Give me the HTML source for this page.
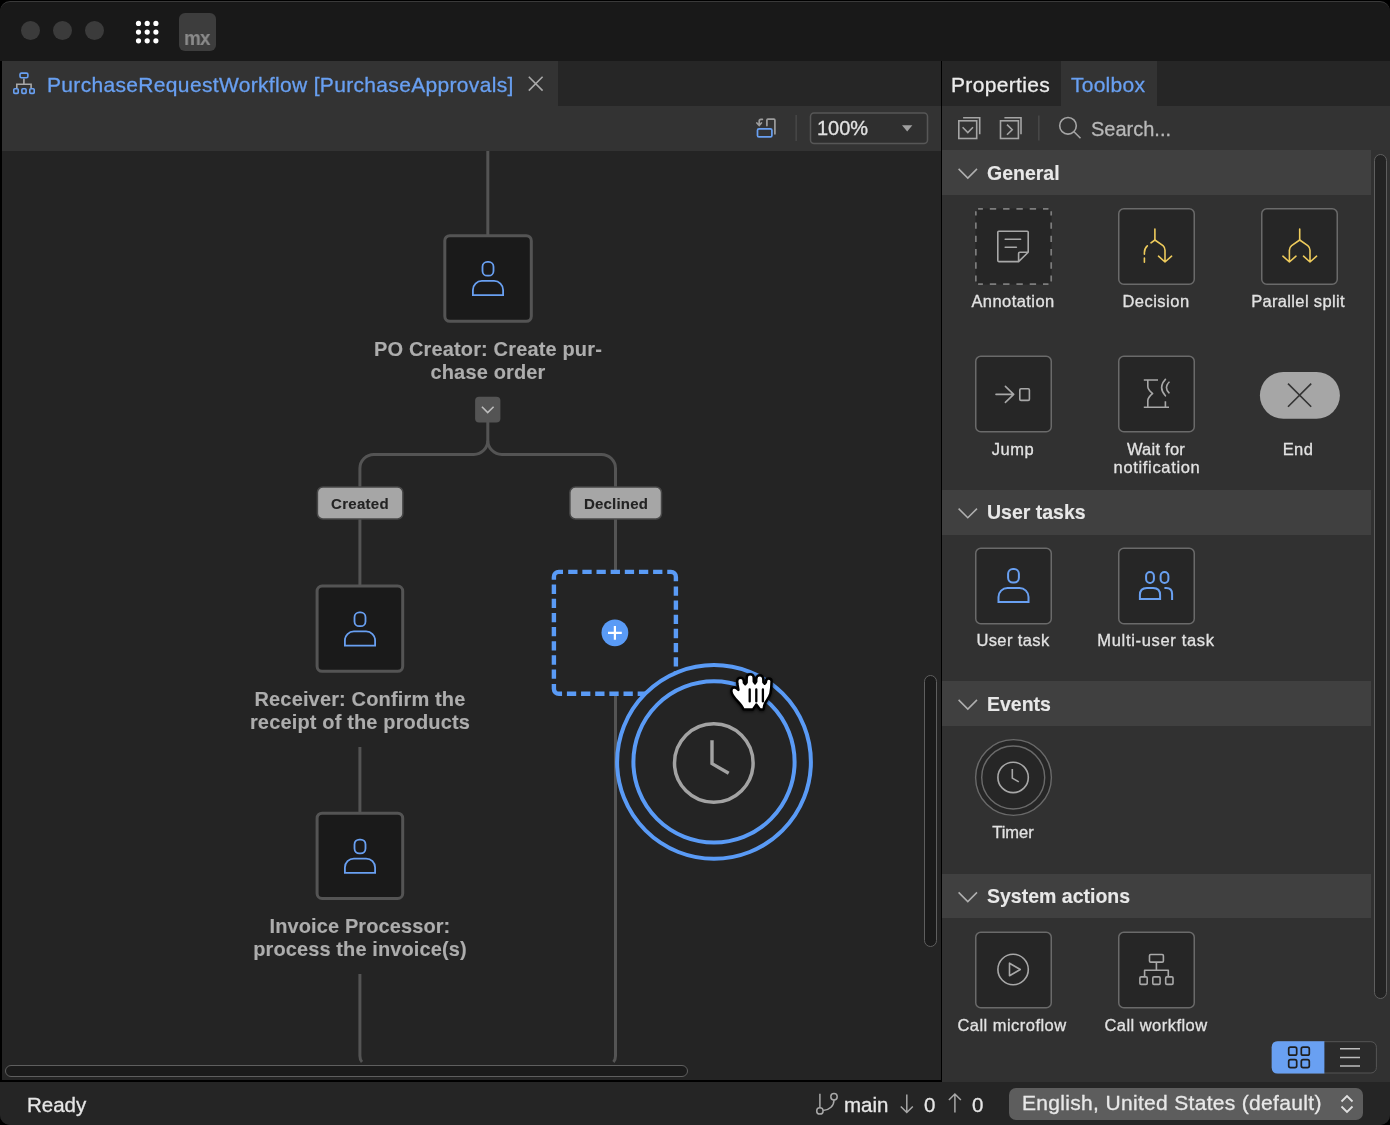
<!DOCTYPE html>
<html><head><meta charset="utf-8">
<style>
html,body{margin:0;padding:0;background:#000;width:1390px;height:1125px;overflow:hidden}
body{font-family:"Liberation Sans",sans-serif}
.a{position:absolute}
#win{position:absolute;left:0;top:0;width:1390px;height:1125px;clip-path:inset(1px 0 0 0 round 10px);background:#191919}
.t{position:absolute;white-space:nowrap;line-height:1;will-change:transform}
svg{position:absolute;left:0;top:0;overflow:visible}
</style></head>
<body>
<div id="win">
<div class="a" style="left:0;top:0;width:1390px;height:61px;background:#191919"></div>
<div class="a" style="left:20.8px;top:21px;width:19px;height:19px;border-radius:50%;background:#3b3b3b"></div>
<div class="a" style="left:53.0px;top:21px;width:19px;height:19px;border-radius:50%;background:#3b3b3b"></div>
<div class="a" style="left:85.0px;top:21px;width:19px;height:19px;border-radius:50%;background:#3b3b3b"></div>
<svg width="1390" height="61"><g fill="#fff"><circle cx="138.5" cy="23.4" r="2.6"/><circle cx="147.2" cy="23.4" r="2.6"/><circle cx="155.9" cy="23.4" r="2.6"/><circle cx="138.5" cy="32.1" r="2.6"/><circle cx="147.2" cy="32.1" r="2.6"/><circle cx="155.9" cy="32.1" r="2.6"/><circle cx="138.5" cy="40.8" r="2.6"/><circle cx="147.2" cy="40.8" r="2.6"/><circle cx="155.9" cy="40.8" r="2.6"/></g><rect x="179" y="13" width="37" height="38" rx="6" fill="#3d3d3d"/></svg>
<div class="t" style="left:184.20px;top:27.22px;font-size:21px;font-weight:700;color:#8a8a8a;letter-spacing:-0.8px;transform:scaleX(0.9);transform-origin:0 0;-webkit-text-stroke:0.12px currentColor;">mx</div>
<div class="a" style="left:0;top:61px;width:942px;height:1021px;background:#000"></div>
<div class="a" style="left:2px;top:61px;width:939px;height:45px;background:#262626"></div>
<div class="a" style="left:2px;top:61px;width:556px;height:45px;background:#333333"></div>
<div class="a" style="left:2px;top:106px;width:939px;height:45px;background:#333333"></div>
<div class="a" style="left:2px;top:151px;width:939px;height:929px;background:#242424"></div>
<svg width="1390" height="1125"><g fill="none" stroke-width="1.6">
<path d="M23.9 78.5V84.2M16.8 88V84.2H31.1V88" stroke="#a8a8a8"/>
<rect x="20" y="73.1" width="7.9" height="4.6" rx="1.5" stroke="#69a0f2"/>
<rect x="13.8" y="88.7" width="4.4" height="4.7" rx="1" stroke="#69a0f2"/>
<rect x="21.9" y="88.7" width="4.2" height="4.7" rx="1" stroke="#69a0f2"/>
<rect x="29.8" y="88.7" width="4.4" height="4.7" rx="1" stroke="#69a0f2"/>
</g>
<path d="M528.8 76.8L542.6 90.6M542.6 76.8L528.8 90.6" stroke="#a9a9a9" stroke-width="1.6" fill="none"/>
</svg>
<div class="t" style="left:47.20px;top:74.32px;font-size:21px;font-weight:400;color:#69a0f2;letter-spacing:0.33px;-webkit-text-stroke:0.3px currentColor;">PurchaseRequestWorkflow [PurchaseApprovals]</div>
<svg width="1390" height="1125"><g fill="none" stroke-width="1.7" stroke-linecap="round" stroke-linejoin="round">
<path d="M766.9 125.6V120.2Q766.9 119.2 767.9 119.2H773.9Q774.9 119.2 774.9 120.2V133.8" stroke="#9d9d9d"/>
<path d="M762.4 119.3H761Q759.2 119.3 759.2 121.2V125.2M756.9 123L759.2 125.5L761.4 123" stroke="#9d9d9d"/>
<rect x="757.5" y="128.8" width="14.4" height="8.1" rx="1.5" stroke="#69a0f2"/>
</g>
<rect x="795.5" y="115" width="1.3" height="26" fill="#4a4a4a"/>
<rect x="810.5" y="113" width="117" height="30.5" rx="3.5" fill="#2f2f2f" stroke="#575757" stroke-width="1.5"/>
<path d="M902 125.2H912.4L907.2 131.6Z" fill="#a0a0a0"/>
</svg>
<div class="t" style="left:817.00px;top:117.97px;font-size:20px;font-weight:400;color:#e2e2e2;letter-spacing:0px;-webkit-text-stroke:0.3px currentColor;">100%</div>
<svg width="1390" height="1125"><g fill="none" stroke="#545454" stroke-width="3">
<path d="M487.8 151V235"/>
<path d="M487.8 422V440.4A14 14 0 0 1 473.8 454.4H373.9A14 14 0 0 0 359.9 468.4V487"/>
<path d="M487.8 440.4A14 14 0 0 0 501.8 454.4H601.5A14 14 0 0 1 615.5 468.4V487"/>
<path d="M359.9 519V585"/>
<path d="M359.9 747V812"/>
<path d="M359.9 974V1056Q359.9 1060 362 1062"/>
<path d="M615.5 519V571"/>
<path d="M615.5 695V1056Q615.5 1060 613.4 1062"/>
</g>
<g fill="#1a1a1a" stroke="#545454" stroke-width="3">
<rect x="444.8" y="235.7" width="86.5" height="85.6" rx="5"/>
<rect x="317.1" y="586" width="85.6" height="85.3" rx="5"/>
<rect x="317.1" y="813.2" width="85.6" height="85.3" rx="5"/>
</g>
<rect x="475.1" y="396.8" width="25.3" height="25.6" rx="4" fill="#545454"/>
<path d="M481.9 406.7L487.7 412.6L493.6 406.7" fill="none" stroke="#bdbdbd" stroke-width="1.6"/>
<g fill="#a6a6a6" stroke="#474747" stroke-width="1.5">
<rect x="317.4" y="487" width="85.5" height="32" rx="5.5"/>
<rect x="569.9" y="487" width="91.6" height="32" rx="5.5"/>
</g>
</svg>
<svg width="1390" height="1125"><rect x="482.50" y="261.90" width="11.00" height="13.80" rx="4.8" fill="none" stroke="#69a0f2" stroke-width="1.8"/><path d="M472.90 295.10V289.90A9 9 0 0 1 481.90 280.90H494.10A9 9 0 0 1 503.10 289.90V295.10Z" fill="none" stroke="#69a0f2" stroke-width="1.8"/><rect x="354.50" y="612.40" width="11.00" height="13.80" rx="4.8" fill="none" stroke="#69a0f2" stroke-width="1.8"/><path d="M344.90 645.60V640.40A9 9 0 0 1 353.90 631.40H366.10A9 9 0 0 1 375.10 640.40V645.60Z" fill="none" stroke="#69a0f2" stroke-width="1.8"/><rect x="354.50" y="839.60" width="11.00" height="13.80" rx="4.8" fill="none" stroke="#69a0f2" stroke-width="1.8"/><path d="M344.90 872.80V867.60A9 9 0 0 1 353.90 858.60H366.10A9 9 0 0 1 375.10 867.60V872.80Z" fill="none" stroke="#69a0f2" stroke-width="1.8"/></svg>
<div class="t" style="left:187.73px;width:600px;text-align:center;top:338.87px;font-size:20px;font-weight:700;color:#adadad;letter-spacing:0.15px;-webkit-text-stroke:0.12px currentColor;">PO Creator: Create pur-</div>
<div class="t" style="left:187.73px;width:600px;text-align:center;top:362.47px;font-size:20px;font-weight:700;color:#adadad;letter-spacing:0.15px;-webkit-text-stroke:0.12px currentColor;">chase order</div>
<div class="t" style="left:59.82px;width:600px;text-align:center;top:688.67px;font-size:20px;font-weight:700;color:#adadad;letter-spacing:0.15px;-webkit-text-stroke:0.12px currentColor;">Receiver: Confirm the</div>
<div class="t" style="left:59.82px;width:600px;text-align:center;top:712.37px;font-size:20px;font-weight:700;color:#adadad;letter-spacing:0.15px;-webkit-text-stroke:0.12px currentColor;">receipt of the products</div>
<div class="t" style="left:59.85px;width:600px;text-align:center;top:915.87px;font-size:20px;font-weight:700;color:#adadad;letter-spacing:0.1px;-webkit-text-stroke:0.12px currentColor;">Invoice Processor:</div>
<div class="t" style="left:59.85px;width:600px;text-align:center;top:939.47px;font-size:20px;font-weight:700;color:#adadad;letter-spacing:0.1px;-webkit-text-stroke:0.12px currentColor;">process the invoice(s)</div>
<div class="t" style="left:59.95px;width:600px;text-align:center;top:496.30px;font-size:15px;font-weight:700;color:#232323;letter-spacing:0.3px;-webkit-text-stroke:0.12px currentColor;">Created</div>
<div class="t" style="left:315.60px;width:600px;text-align:center;top:496.30px;font-size:15px;font-weight:700;color:#232323;letter-spacing:0.2px;-webkit-text-stroke:0.12px currentColor;">Declined</div>
<svg width="1390" height="1125">
<path d="M558.9 571.9H670.9A5 5 0 0 1 675.9 576.9V688.8A5 5 0 0 1 670.9 693.8H558.9A5 5 0 0 1 553.9 688.8V576.9A5 5 0 0 1 558.9 571.9Z" fill="none" stroke="#5a9bf6" stroke-width="4.4" stroke-dasharray="15.6 5.2 9.3 4.85 9.3 4.85 9.3 4.85 9.3 4.85 9.3 4.85 9.3 4.85 9.3 4.85" stroke-dashoffset="11.5"/>
<circle cx="614.9" cy="632.8" r="13.4" fill="#5a9bf6"/>
<path d="M614.9 625.9V639.7M608 632.8H621.8" stroke="#fff" stroke-width="2.2"/>
<circle cx="714" cy="761.9" r="96.9" fill="#242424" stroke="#5a9bf6" stroke-width="4"/>
<circle cx="714" cy="761.9" r="80.6" fill="none" stroke="#5a9bf6" stroke-width="4"/>
<circle cx="713.8" cy="763" r="39.3" fill="none" stroke="#a3a3a3" stroke-width="3.5"/>
<path d="M712 740.3V763.6L728.7 773.3" fill="none" stroke="#a3a3a3" stroke-width="3.4"/>
</svg>
<svg width="1390" height="1125" style="filter:drop-shadow(0 1px 1.5px rgba(0,0,0,0.7))"><g transform="translate(725 665)">
<path d="M18.4 44.2C17.5 41.5 16 39.8 13 36.6C9 32.5 6.6 29.5 6.4 26.5C6.2 23.4 7.8 22.3 9.5 22.5C11 22.7 12.2 23.6 13.4 24.8L12.4 19L12.2 16A3.3 3.3 0 0 1 18.8 16L18.9 17.6L20.25 19.2L21.6 17.4L21.7 12.7A3.5 3.5 0 0 1 28.7 12.7L28.8 16.6L30 18.4L31.2 16.6L31.3 13.8A3.5 3.5 0 0 1 38.3 13.8L38.4 17.2L39.65 18.8L40.9 17.2L41 16.3A2.8 2.8 0 0 1 46.6 16.3C46.5 21 46.2 25 45.4 28.5C44.6 31.8 42 35 40.3 37.8C39.2 39.8 38.7 42 38.5 44.4L35 44.4L31.3 39.6L28 44.4Z" fill="#fff" stroke="#000" stroke-width="2.5" stroke-linejoin="round"/>
<path d="M24.7 24.4V36.4M31.3 24.4V36.4M37.9 24.4V36.4" stroke="#000" stroke-width="2.3" stroke-linecap="round"/>
</g></svg>
<div class="a" style="left:5px;top:1064.5px;width:682px;height:11px;border-radius:6px;background:#1b1b1b;border:1.2px solid #5f5f5f;box-sizing:border-box;width:683px;height:12px"></div>
<div class="a" style="left:924px;top:675px;width:13px;height:272px;border-radius:7px;background:#1b1b1b;border:1.2px solid #5f5f5f;box-sizing:border-box"></div>
<div class="a" style="left:0;top:1082px;width:1390px;height:43px;background:#252525"></div>
<div class="t" style="left:27.00px;top:1094.55px;font-size:20.5px;font-weight:400;color:#e6e6e6;letter-spacing:0px;-webkit-text-stroke:0.3px currentColor;">Ready</div>
<svg width="1390" height="1125"><g fill="none" stroke="#a8a8a8" stroke-width="1.5">
<circle cx="819.9" cy="1110.9" r="3.2"/><circle cx="834" cy="1096.7" r="3.2"/>
<path d="M819.9 1107.7V1093.8M823.1 1110.6C829.5 1110 834 1106 834 1099.9"/>
<path d="M906.8 1094.5V1112.5M900.8 1106.5L906.8 1112.5L912.8 1106.5"/>
<path d="M954.9 1094V1112.5M948.9 1100L954.9 1094L960.9 1100"/>
</g></svg>
<div class="t" style="left:844.00px;top:1094.85px;font-size:20.5px;font-weight:400;color:#e6e6e6;letter-spacing:0px;-webkit-text-stroke:0.3px currentColor;">main</div>
<div class="t" style="left:924.00px;top:1094.85px;font-size:20.5px;font-weight:400;color:#e6e6e6;letter-spacing:0px;-webkit-text-stroke:0.3px currentColor;">0</div>
<div class="t" style="left:971.50px;top:1094.85px;font-size:20.5px;font-weight:400;color:#e6e6e6;letter-spacing:0px;-webkit-text-stroke:0.3px currentColor;">0</div>
<div class="a" style="left:1009px;top:1088px;width:354px;height:31.5px;border-radius:7px;background:#5d5d5d"></div>
<div class="t" style="left:1022.30px;top:1092.22px;font-size:21px;font-weight:400;color:#e8e8e8;letter-spacing:0.32px;-webkit-text-stroke:0.3px currentColor;">English, United States (default)</div>
<svg width="1390" height="1125"><path d="M1341.5 1101.5L1347 1096L1352.5 1101.5M1341.5 1106.5L1347 1112L1352.5 1106.5" fill="none" stroke="#e0e0e0" stroke-width="1.8"/></svg>
<div class="a" style="left:942px;top:61px;width:448px;height:45px;background:#262626"></div>
<div class="a" style="left:1061px;top:61px;width:95.5px;height:45px;background:#333333"></div>
<div class="a" style="left:942px;top:106px;width:448px;height:44px;background:#333333"></div>
<div class="a" style="left:942px;top:150px;width:448px;height:932px;background:#313131"></div>
<div class="t" style="left:951.00px;top:74.32px;font-size:21px;font-weight:400;color:#ececec;letter-spacing:0.33px;-webkit-text-stroke:0.3px currentColor;">Properties</div>
<div class="t" style="left:1071.00px;top:74.32px;font-size:21px;font-weight:400;color:#69a0f2;letter-spacing:0.25px;-webkit-text-stroke:0.3px currentColor;">Toolbox</div>
<svg width="1390" height="1125"><g fill="none" stroke="#a5a5a5" stroke-width="1.6">
<rect x="958.8" y="120.8" width="17.9" height="17.7"/>
<path d="M963.1 117.8H979.7V134.2"/>
<path d="M962.6 127.3L967.8 132.5L973 127.3"/>
<rect x="1000.5" y="120.8" width="17.9" height="17.7"/>
<path d="M1004.4 117.8H1021V134.2"/>
<path d="M1007 124.6L1012.2 129.7L1007 134.8"/>
<circle cx="1068" cy="125.8" r="8.3"/>
<path d="M1074 131.8L1080.5 138.3"/>
</g>
<rect x="1038.2" y="115.5" width="1.3" height="25" fill="#4d4d4d"/>
</svg>
<div class="t" style="left:1090.50px;top:118.87px;font-size:20px;font-weight:400;color:#b8b8b8;letter-spacing:0px;-webkit-text-stroke:0.3px currentColor;">Search...</div>
<div class="a" style="left:942px;top:150.3px;width:429px;height:44.5px;background:#404040"></div>
<svg width="1390" height="1125"><path d="M958.6 168.9L967.8 178.10000000000002L977 168.9" fill="none" stroke="#b0b0b0" stroke-width="1.5"/></svg>
<div class="t" style="left:987.00px;top:163.79px;font-size:19.5px;font-weight:700;color:#e8e8e8;letter-spacing:0px;-webkit-text-stroke:0.12px currentColor;">General</div>
<div class="a" style="left:942px;top:490px;width:429px;height:44.5px;background:#404040"></div>
<svg width="1390" height="1125"><path d="M958.6 508.6L967.8 517.8L977 508.6" fill="none" stroke="#b0b0b0" stroke-width="1.5"/></svg>
<div class="t" style="left:987.00px;top:503.49px;font-size:19.5px;font-weight:700;color:#e8e8e8;letter-spacing:0px;-webkit-text-stroke:0.12px currentColor;">User tasks</div>
<div class="a" style="left:942px;top:681.3px;width:429px;height:44.5px;background:#404040"></div>
<svg width="1390" height="1125"><path d="M958.6 699.9L967.8 709.0999999999999L977 699.9" fill="none" stroke="#b0b0b0" stroke-width="1.5"/></svg>
<div class="t" style="left:987.00px;top:694.79px;font-size:19.5px;font-weight:700;color:#e8e8e8;letter-spacing:0px;-webkit-text-stroke:0.12px currentColor;">Events</div>
<div class="a" style="left:942px;top:873.8px;width:429px;height:44.5px;background:#404040"></div>
<svg width="1390" height="1125"><path d="M958.6 892.4L967.8 901.5999999999999L977 892.4" fill="none" stroke="#b0b0b0" stroke-width="1.5"/></svg>
<div class="t" style="left:987.00px;top:887.29px;font-size:19.5px;font-weight:700;color:#e8e8e8;letter-spacing:0px;-webkit-text-stroke:0.12px currentColor;">System actions</div>
<div class="a" style="left:1374px;top:154px;width:13px;height:845px;border-radius:7px;background:#232323;border:1.2px solid #5f5f5f;box-sizing:border-box"></div>
<svg width="1390" height="1125"><rect x="975.50" y="208.50" width="76" height="76" rx="5" fill="#262626"/><g fill="none" stroke="#7d7d7d" stroke-width="1.7" stroke-dasharray="6.4 6.9" stroke-dashoffset="1.6"><path d="M978.10 208.85H1048.50M978.10 284.20H1048.50"/><path d="M975.85 211.20V281.50M1051.20 211.20V281.50" stroke-dashoffset="2.1"/></g><rect x="1118.75" y="208.75" width="75.5" height="75.5" rx="5" fill="#262626" stroke="#6a6a6a" stroke-width="1.5"/><rect x="1261.75" y="208.75" width="75.5" height="75.5" rx="5" fill="#262626" stroke="#6a6a6a" stroke-width="1.5"/><rect x="975.75" y="356.25" width="75.5" height="75.5" rx="5" fill="#262626" stroke="#6a6a6a" stroke-width="1.5"/><rect x="1118.75" y="356.25" width="75.5" height="75.5" rx="5" fill="#262626" stroke="#6a6a6a" stroke-width="1.5"/><rect x="975.75" y="548.25" width="75.5" height="75.5" rx="5" fill="#262626" stroke="#6a6a6a" stroke-width="1.5"/><rect x="1118.75" y="548.25" width="75.5" height="75.5" rx="5" fill="#262626" stroke="#6a6a6a" stroke-width="1.5"/><rect x="975.75" y="932.25" width="75.5" height="75.5" rx="5" fill="#262626" stroke="#6a6a6a" stroke-width="1.5"/><rect x="1118.75" y="932.25" width="75.5" height="75.5" rx="5" fill="#262626" stroke="#6a6a6a" stroke-width="1.5"/></svg>
<svg width="1390" height="1125"><g fill="none" stroke-width="1.6" stroke-linecap="round" stroke-linejoin="round">
<!-- annotation -->
<path d="M1018.6 261.6H998.8Q997.8 261.6 997.8 260.6V232.2Q997.8 231.2 998.8 231.2H1027.2Q1028.2 231.2 1028.2 232.2V252.2ZM1018.6 261.6V253.4Q1018.6 252.2 1019.8 252.2H1028.2" stroke="#a8a8a8"/>
<path d="M1005.2 239.3H1020.6M1005.2 247.3H1016.4" stroke="#a8a8a8"/>
<!-- decision -->
<path d="M1154.9 229V240L1163 245.6Q1165 247.4 1165 250.3V262M1158.5 256.2L1165 262L1171.6 256.2" stroke="#eecb5c"/>
<path d="M1154.9 240L1151 242.8M1147.3 245.9Q1144.4 248.6 1144.4 252.4V254.2M1144.4 258V262.2" stroke="#eecb5c"/>
<!-- parallel split -->
<path d="M1299.7 229V240L1307.8 245.6Q1310 247.4 1310 250.3V262M1303.5 256.2L1310 262L1316.6 256.2" stroke="#eecb5c"/>
<path d="M1299.7 240L1291.6 245.6Q1289.4 247.4 1289.4 250.3V262M1282.9 256.2L1289.4 262L1296 256.2" stroke="#eecb5c"/>
<!-- jump -->
<path d="M996 394.4H1013.7M1005.4 386.4L1013.7 394.4L1005.4 402.4" stroke="#a8a8a8"/>
<rect x="1019.8" y="388.8" width="9.6" height="11.6" rx="1.2" stroke="#a8a8a8"/>
<!-- wait -->
<path d="M1143.8 380H1158M1147.8 380V386.6C1147.8 389.6 1150 391.4 1152.6 393.6C1150 395.8 1147.8 397.6 1147.8 400.6V407.2M1143.8 407.2H1169M1165.4 401.2V407.2" stroke="#a8a8a8" stroke-linecap="butt"/>
<path d="M1165.4 379.4C1160.6 384.6 1160.6 390.6 1165.4 395.8M1169 382.2C1165.6 385.6 1165.6 389.6 1169 392.8" stroke="#a8a8a8"/>
</g>
<rect x="1259.9" y="372" width="80" height="46.8" rx="23.4" fill="#a6a6a6"/>
<path d="M1288 383.6L1311.2 406.8M1311.2 383.6L1288 406.8" stroke="#333" stroke-width="1.6"/>
</svg>
<svg width="1390" height="1125"><rect x="1008.10" y="569.00" width="10.80" height="13.60" rx="4.8" fill="none" stroke="#69a0f2" stroke-width="2"/><path d="M998.50 602.00V597.00A9 9 0 0 1 1007.50 588.00H1019.50A9 9 0 0 1 1028.50 597.00V602.00Z" fill="none" stroke="#69a0f2" stroke-width="2"/></svg>
<svg width="1390" height="1125"><g fill="none" stroke="#69a0f2" stroke-width="2">
<rect x="1146.1" y="572.1" width="7.8" height="10.9" rx="3.9"/>
<rect x="1160.6" y="572.1" width="7.8" height="10.9" rx="3.9"/>
<path d="M1139.9 599V595Q1139.9 588 1146.9 588H1153.1Q1160.1 588 1160.1 595V599Z"/>
<path d="M1164.4 588H1166.2Q1172.1 588 1172.1 594V600"/>
</g></svg>
<svg width="1390" height="1125">
<circle cx="1013.5" cy="777.5" r="37.9" fill="#262626" stroke="#6a6a6a" stroke-width="1.4"/>
<circle cx="1013.2" cy="777.5" r="31.5" fill="none" stroke="#6a6a6a" stroke-width="1.4"/>
<circle cx="1013.1" cy="777.4" r="15.2" fill="none" stroke="#a8a8a8" stroke-width="1.6"/>
<path d="M1012.3 769V778.1L1018.8 781.9" fill="none" stroke="#a8a8a8" stroke-width="1.6"/>
<g fill="none" stroke="#a8a8a8" stroke-width="1.6" stroke-linejoin="round">
<circle cx="1013.1" cy="969.5" r="15.2"/>
<path d="M1009.5 963.2V975.8L1020.3 969.5Z"/>
<rect x="1149.5" y="954.5" width="13.9" height="7.6" rx="1.2"/>
<path d="M1156.4 962.3V970.3M1144.6 976V970.3H1168.3V976"/>
<rect x="1139.9" y="976.9" width="7.3" height="7.5" rx="1.2"/>
<rect x="1152.8" y="976.9" width="7.3" height="7.5" rx="1.2"/>
<rect x="1165.7" y="976.9" width="7.3" height="7.5" rx="1.2"/>
</g></svg>
<div class="t" style="left:713.08px;width:600px;text-align:center;top:293.03px;font-size:16.5px;font-weight:400;color:#e2e2e2;letter-spacing:0.43px;-webkit-text-stroke:0.3px currentColor;">Annotation</div>
<div class="t" style="left:856.46px;width:600px;text-align:center;top:293.03px;font-size:16.5px;font-weight:400;color:#e2e2e2;letter-spacing:0.49px;-webkit-text-stroke:0.3px currentColor;">Decision</div>
<div class="t" style="left:998.13px;width:600px;text-align:center;top:293.03px;font-size:16.5px;font-weight:400;color:#e2e2e2;letter-spacing:0.34px;-webkit-text-stroke:0.3px currentColor;">Parallel split</div>
<div class="t" style="left:712.94px;width:600px;text-align:center;top:441.03px;font-size:16.5px;font-weight:400;color:#e2e2e2;letter-spacing:0.52px;-webkit-text-stroke:0.3px currentColor;">Jump</div>
<div class="t" style="left:855.78px;width:600px;text-align:center;top:441.03px;font-size:16.5px;font-weight:400;color:#e2e2e2;letter-spacing:0.24px;-webkit-text-stroke:0.3px currentColor;">Wait for</div>
<div class="t" style="left:856.67px;width:600px;text-align:center;top:459.33px;font-size:16.5px;font-weight:400;color:#e2e2e2;letter-spacing:0.66px;-webkit-text-stroke:0.3px currentColor;">notification</div>
<div class="t" style="left:998.10px;width:600px;text-align:center;top:441.03px;font-size:16.5px;font-weight:400;color:#e2e2e2;letter-spacing:0.4px;-webkit-text-stroke:0.3px currentColor;">End</div>
<div class="t" style="left:712.71px;width:600px;text-align:center;top:632.43px;font-size:16.5px;font-weight:400;color:#e2e2e2;letter-spacing:0.38px;-webkit-text-stroke:0.3px currentColor;">User task</div>
<div class="t" style="left:855.66px;width:600px;text-align:center;top:632.43px;font-size:16.5px;font-weight:400;color:#e2e2e2;letter-spacing:0.67px;-webkit-text-stroke:0.3px currentColor;">Multi-user task</div>
<div class="t" style="left:713.10px;width:600px;text-align:center;top:824.33px;font-size:16.5px;font-weight:400;color:#e2e2e2;letter-spacing:0.0px;-webkit-text-stroke:0.3px currentColor;">Timer</div>
<div class="t" style="left:711.77px;width:600px;text-align:center;top:1016.93px;font-size:16.5px;font-weight:400;color:#e2e2e2;letter-spacing:0.46px;-webkit-text-stroke:0.3px currentColor;">Call microflow</div>
<div class="t" style="left:855.67px;width:600px;text-align:center;top:1016.93px;font-size:16.5px;font-weight:400;color:#e2e2e2;letter-spacing:0.46px;-webkit-text-stroke:0.3px currentColor;">Call workflow</div>
<svg width="1390" height="1125">
<rect x="1272.2" y="1041.7" width="104.2" height="31.3" rx="5.5" fill="#2b2b2b" stroke="#555" stroke-width="1"/>
<path d="M1277.7 1041.2H1324.4V1073.5H1277.7Q1271.7 1073.5 1271.7 1067.5V1047.2Q1271.7 1041.2 1277.7 1041.2Z" fill="#69a0f2"/>
<g fill="none" stroke="#1f1f1f" stroke-width="1.7">
<rect x="1288.7" y="1047.2" width="8" height="8" rx="1.8"/><rect x="1301.3" y="1047.2" width="8" height="8" rx="1.8"/>
<rect x="1288.7" y="1059.6" width="8" height="8" rx="1.8"/><rect x="1301.3" y="1059.6" width="8" height="8" rx="1.8"/>
</g>
<path d="M1340 1048.7H1360M1340 1057.4H1360M1340 1066H1360" stroke="#bdbdbd" stroke-width="1.5"/>
</svg>
<div class="a" style="left:0;top:1px;width:1390px;height:1124px;box-sizing:border-box;border-radius:10px;border-top:1px solid #3a3a3a"></div>
</div>
</body></html>
